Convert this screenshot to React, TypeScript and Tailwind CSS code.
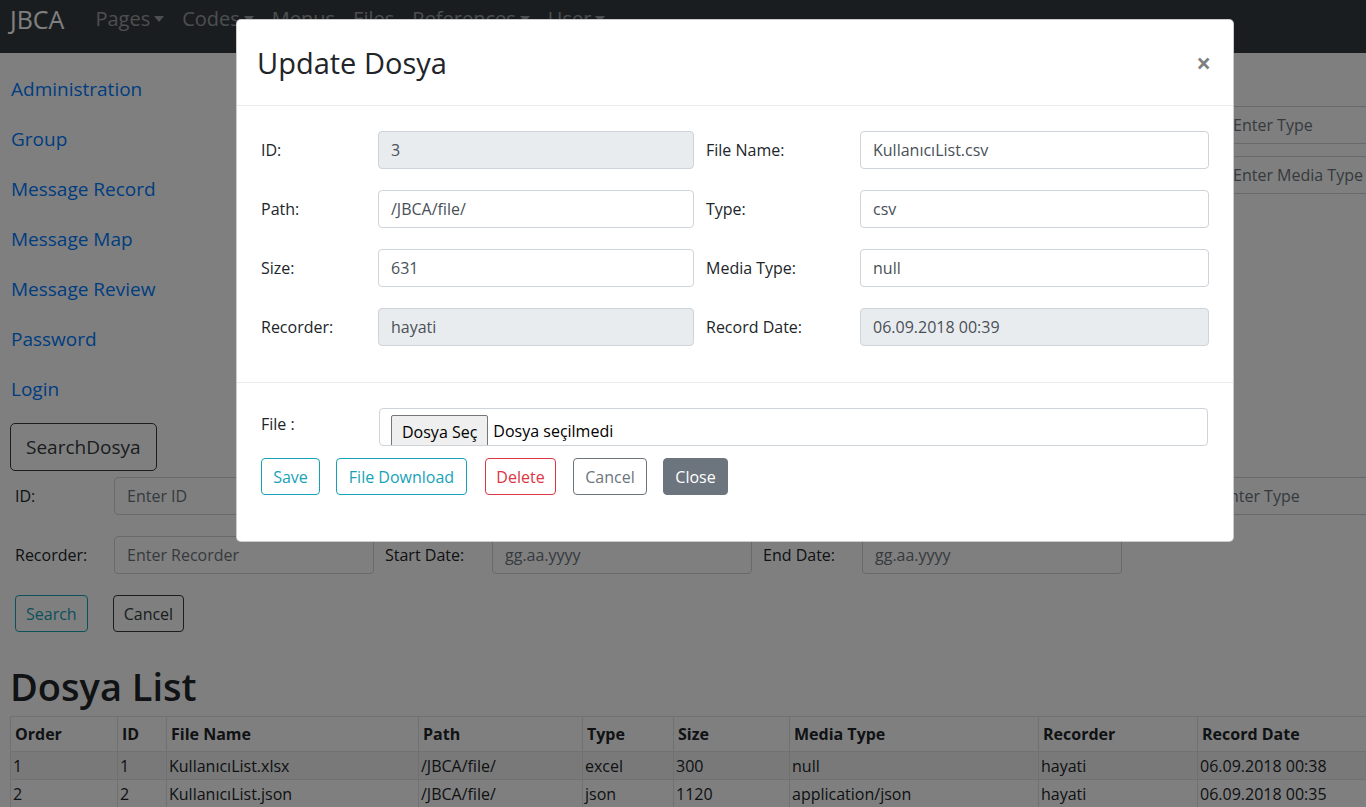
const navItems = [
  { label: "Pages", caret: true },
  { label: "Codes", caret: true },
  { label: "Menus", caret: false },
  { label: "Files", caret: false },
  { label: "References", caret: true },
  { label: "User", caret: true },
];

const sideLinks = [
  "Administration",
  "Group",
  "Message Record",
  "Message Map",
  "Message Review",
  "Password",
  "Login",
];

const columns = [
  { title: "Order", w: "w-[107px]" },
  { title: "ID", w: "w-[49px]" },
  { title: "File Name", w: "w-[252px]" },
  { title: "Path", w: "w-[164px]" },
  { title: "Type", w: "w-[91px]" },
  { title: "Size", w: "w-[116px]" },
  { title: "Media Type", w: "w-[249px]" },
  { title: "Recorder", w: "w-[159px]" },
  { title: "Record Date", w: "w-[200px]" },
];

const rows = [
  ["1", "1", "KullanıcıList.xlsx", "/JBCA/file/", "excel", "300", "null", "hayati", "06.09.2018 00:38"],
  ["2", "2", "KullanıcıList.json", "/JBCA/file/", "json", "1120", "application/json", "hayati", "06.09.2018 00:35"],
];

const modalRows = [
  [
    { label: "ID:", value: "3", disabled: true },
    { label: "File Name:", value: "KullanıcıList.csv", disabled: false },
  ],
  [
    { label: "Path:", value: "/JBCA/file/", disabled: false },
    { label: "Type:", value: "csv", disabled: false },
  ],
  [
    { label: "Size:", value: "631", disabled: false },
    { label: "Media Type:", value: "null", disabled: false },
  ],
  [
    { label: "Recorder:", value: "hayati", disabled: true },
    { label: "Record Date:", value: "06.09.2018 00:39", disabled: true },
  ],
];

function Caret() {
  return <span className="ml-[4px] inline-block border-x-[5px] border-t-[6px] border-x-transparent border-t-current align-middle" />;
}

function PageInput({ placeholder, w }: { placeholder: string; w: string }) {
  return (
    <div className={`${w} h-[38px] shrink-0 rounded-[4px] border border-[#ced4da] bg-white px-[12px] flex items-center whitespace-nowrap text-[16px] text-[#6c757d]`}>
      {placeholder}
    </div>
  );
}

function ModalField({ label, value, disabled, labelW, inputW }: { label: string; value: string; disabled?: boolean; labelW: string; inputW: string }) {
  return (
    <div className="flex items-center">
      <div className={`${labelW} shrink-0 text-[16px] text-[#212529]`}>{label}</div>
      <div
        className={`${inputW} h-[38px] shrink-0 rounded-[4px] border border-[#ced4da] px-[12px] flex items-center text-[16px] text-[#495057] ${disabled ? "bg-[#e9ecef]" : "bg-white"}`}
      >
        {value}
      </div>
    </div>
  );
}

export default function App() {
  return (
    <div className="relative h-[807px] w-[1366px] overflow-hidden bg-white font-['Segoe_UI','Open_Sans',sans-serif] text-[#212529]">
      {/* Navbar */}
      <nav className="h-[53px] bg-[#343a40] flex items-start pt-[3px] px-[10px]">
        <span className="text-[25px] leading-[32px] text-white mr-[31px]">JBCA</span>
        <div className="flex items-center gap-[18px] h-[32px] text-[20px] text-white/50">
          {navItems.map((n) => (
            <span key={n.label} className="flex items-center">
              {n.label}
              {n.caret && <Caret />}
            </span>
          ))}
        </div>
      </nav>

      {/* Top section: sidebar + create form */}
      <div className="flex">
        <div className="w-[230px] shrink-0 pt-[11px] px-[11px]">
          {sideLinks.map((l) => (
            <div key={l} className="h-[50px] flex items-center text-[19px] text-[#007bff]">
              {l}
            </div>
          ))}
        </div>
        <div className="flex-1 pt-[53px] pl-[990px] flex flex-col gap-[12px]">
          <PageInput placeholder="Enter Type" w="w-[300px]" />
          <PageInput placeholder="Enter Media Type" w="w-[300px]" />
        </div>
      </div>

      {/* Search section */}
      <div className="px-[10px] pt-[9px]">
        <button className="h-[48px] px-[15px] rounded-[5px] border border-[#343a40] text-[19px] text-[#343a40]">SearchDosya</button>
        <div className="px-[5px] pt-[6px]">
          <div className="flex items-center h-[38px]">
            <span className="w-[99px] shrink-0">ID:</span>
            <PageInput placeholder="Enter ID" w="w-[260px]" />
            <span className="w-[11px] shrink-0" />
            <span className="w-[107px] shrink-0">File Name:</span>
            <PageInput placeholder="Enter File Name" w="w-[260px]" />
            <span className="w-[11px] shrink-0" />
            <span className="w-[99px] shrink-0">Path:</span>
            <PageInput placeholder="Enter Path" w="w-[260px]" />
            <span className="w-[11px] shrink-0" />
            <span className="w-[74px] shrink-0">Type:</span>
            <PageInput placeholder="Enter Type" w="w-[260px]" />
          </div>
          <div className="flex items-center h-[38px] mt-[21px]">
            <span className="w-[99px] shrink-0">Recorder:</span>
            <PageInput placeholder="Enter Recorder" w="w-[260px]" />
            <span className="w-[11px] shrink-0" />
            <span className="w-[107px] shrink-0">Start Date:</span>
            <PageInput placeholder="gg.aa.yyyy" w="w-[260px]" />
            <span className="w-[11px] shrink-0" />
            <span className="w-[99px] shrink-0">End Date:</span>
            <PageInput placeholder="gg.aa.yyyy" w="w-[260px]" />
          </div>
          <div className="flex items-center gap-[25px] mt-[21px]">
            <button className="h-[37px] px-[10px] rounded-[4px] border border-[#17a2b8] text-[16px] text-[#17a2b8]">Search</button>
            <button className="h-[37px] px-[10px] rounded-[4px] border border-[#343a40] text-[16px] text-[#343a40]">Cancel</button>
          </div>
        </div>

        <h1 className="mt-[30px] text-[38px] font-semibold leading-[48px]">Dosya List</h1>
        <table className="mt-[6px] w-[1387px] table-fixed border-collapse text-[16px]">
          <thead>
            <tr className="h-[35px]">
              {columns.map((c) => (
                <th key={c.title} className={`${c.w} border border-[#dee2e6] px-[4px] text-left font-bold`}>
                  {c.title}
                </th>
              ))}
            </tr>
          </thead>
          <tbody>
            {rows.map((r, i) => (
              <tr key={i} className={`h-[28px] ${i % 2 === 0 ? "bg-black/5" : ""}`}>
                {r.map((cell, j) => (
                  <td key={j} className="border border-[#dee2e6] px-[2px] leading-[26px] whitespace-nowrap">
                    {cell}
                  </td>
                ))}
              </tr>
            ))}
          </tbody>
        </table>
      </div>

      {/* Modal backdrop */}
      <div className="absolute inset-0 bg-black/50">
        <div className="ml-[236px] mt-[19px] w-[998px] rounded-[5px] bg-white border border-black/20">
          <div className="h-[86px] flex items-center justify-between px-[20px] border-b border-[#e9ecef]">
            <h4 className="text-[29px] font-medium">Update Dosya</h4>
            <span className="text-[26px] font-bold text-black/50 leading-none mr-[2px]">×</span>
          </div>
          <div className="px-[24px] pt-[25px] pb-[36px] flex flex-col gap-[21px]">
            {modalRows.map((row, i) => (
              <div key={i} className="flex items-center gap-[12px]">
                <ModalField label={row[0].label} value={row[0].value} disabled={row[0].disabled} labelW="w-[117px]" inputW="w-[316px]" />
                <ModalField label={row[1].label} value={row[1].value} disabled={row[1].disabled} labelW="w-[154px]" inputW="w-[349px]" />
              </div>
            ))}
          </div>
          <div className="border-t border-[#e9ecef] px-[24px] pt-[25px] pb-[46px]">
            <div className="flex items-start">
              <span className="w-[118px] shrink-0 pt-[4px] text-[16px]">File :</span>
              <div className="w-[829px] h-[38px] rounded-[4px] border border-[#ced4da] pl-[11px] pt-[6px] flex items-start overflow-hidden">
                <span className="h-[34px] px-[10px] flex items-center border border-[#767676] bg-[#efefef] text-[16px] text-black rounded-t-[2px]">Dosya Seç</span>
                <span className="ml-[5px] h-[31px] flex items-center text-[16px] text-black">Dosya seçilmedi</span>
              </div>
            </div>
            <div className="mt-[12px] flex items-center">
              <button className="w-[59px] h-[37px] rounded-[4px] border border-[#17a2b8] text-[16px] text-[#17a2b8]">Save</button>
              <button className="ml-[16px] w-[131px] h-[37px] rounded-[4px] border border-[#17a2b8] text-[16px] text-[#17a2b8]">File Download</button>
              <button className="ml-[18px] w-[71px] h-[37px] rounded-[4px] border border-[#dc3545] text-[16px] text-[#dc3545]">Delete</button>
              <button className="ml-[17px] w-[74px] h-[37px] rounded-[4px] border border-[#6c757d] text-[16px] text-[#6c757d]">Cancel</button>
              <button className="ml-[16px] w-[65px] h-[37px] rounded-[4px] border border-[#6c757d] bg-[#6c757d] text-[16px] text-white">Close</button>
            </div>
          </div>
        </div>
      </div>
    </div>
  );
}
